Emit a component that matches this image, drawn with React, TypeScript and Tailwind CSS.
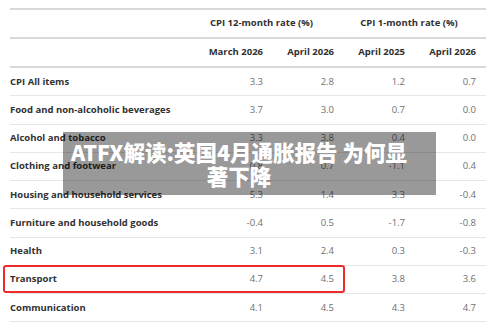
import React from "react";

const rows: [string, string, string, string, string][] = [
  ["CPI All items", "3.3", "2.8", "1.2", "0.7"],
  ["Food and non-alcoholic beverages", "3.7", "3.0", "0.7", "0.0"],
  ["Alcohol and tobacco", "3.3", "3.8", "0.4", "0.0"],
  ["Clothing and footwear", "0.8", "0.7", "-1.1", "0.4"],
  ["Housing and household services", "5.3", "1.4", "3.3", "-0.4"],
  ["Furniture and household goods", "-0.4", "0.5", "-1.7", "-0.8"],
  ["Health", "3.1", "2.4", "0.3", "-0.3"],
  ["Transport", "4.7", "4.5", "3.8", "3.6"],
  ["Communication", "4.1", "4.5", "4.3", "4.7"],
];

export default function App() {
  return (
    <div className="relative w-[500px] h-[328px] overflow-hidden bg-white font-['Open_Sans',sans-serif] text-[9.5px]">
      <div className="pt-[8px] pl-[10px]">
        <div className="w-[476px] border-t-2 border-[#d9d9d9]">
          <div className="grid grid-cols-[192px_142px_142px] h-[29px] items-center border-b-2 border-[#d9d9d9] font-bold text-[#323132]">
            <div />
            <div className="text-center pr-[23px]">CPI 12-month rate (%)</div>
            <div className="text-center pr-[12px]">CPI 1-month rate (%)</div>
          </div>
          <div className="grid grid-cols-[192px_71px_71px_71px_71px] h-[29px] items-center border-b-2 border-[#d9d9d9] font-bold text-[#323132]">
            <div />
            <div className="text-right pr-[10px]">March 2026</div>
            <div className="text-right pr-[10px]">April 2026</div>
            <div className="text-right pr-[10px]">April 2025</div>
            <div className="text-right pr-[10px]">April 2026</div>
          </div>
          {rows.map((r) => (
            <div
              key={r[0]}
              className="grid grid-cols-[192px_71px_71px_71px_71px] h-[28.25px] items-center border-b border-[#e6e6e6]"
            >
              <div className="font-bold text-[#323132] whitespace-nowrap">{r[0]}</div>
              <div className="text-right pr-[10px] text-[#707071]">{r[1]}</div>
              <div className="text-right pr-[10px] text-[#707071]">{r[2]}</div>
              <div className="text-right pr-[10px] text-[#707071]">{r[3]}</div>
              <div className="text-right pr-[10px] text-[#707071]">{r[4]}</div>
            </div>
          ))}
        </div>
      </div>

      <div className="absolute left-[3px] top-[265px] w-[342px] h-[28px] rounded-[3px] border-2 border-[#ee2b2b]" />

      <div className="absolute left-[63px] top-[132px] w-[373px] h-[63px] bg-black/40 pt-[8px] pr-[21px] text-center text-white font-black text-[21.5px] leading-[24px] font-['Noto_Sans_CJK_SC',sans-serif] whitespace-nowrap">
        ATFX解读:英国4月通胀报告 为何显
        <br />
        著下降
      </div>
    </div>
  );
}
